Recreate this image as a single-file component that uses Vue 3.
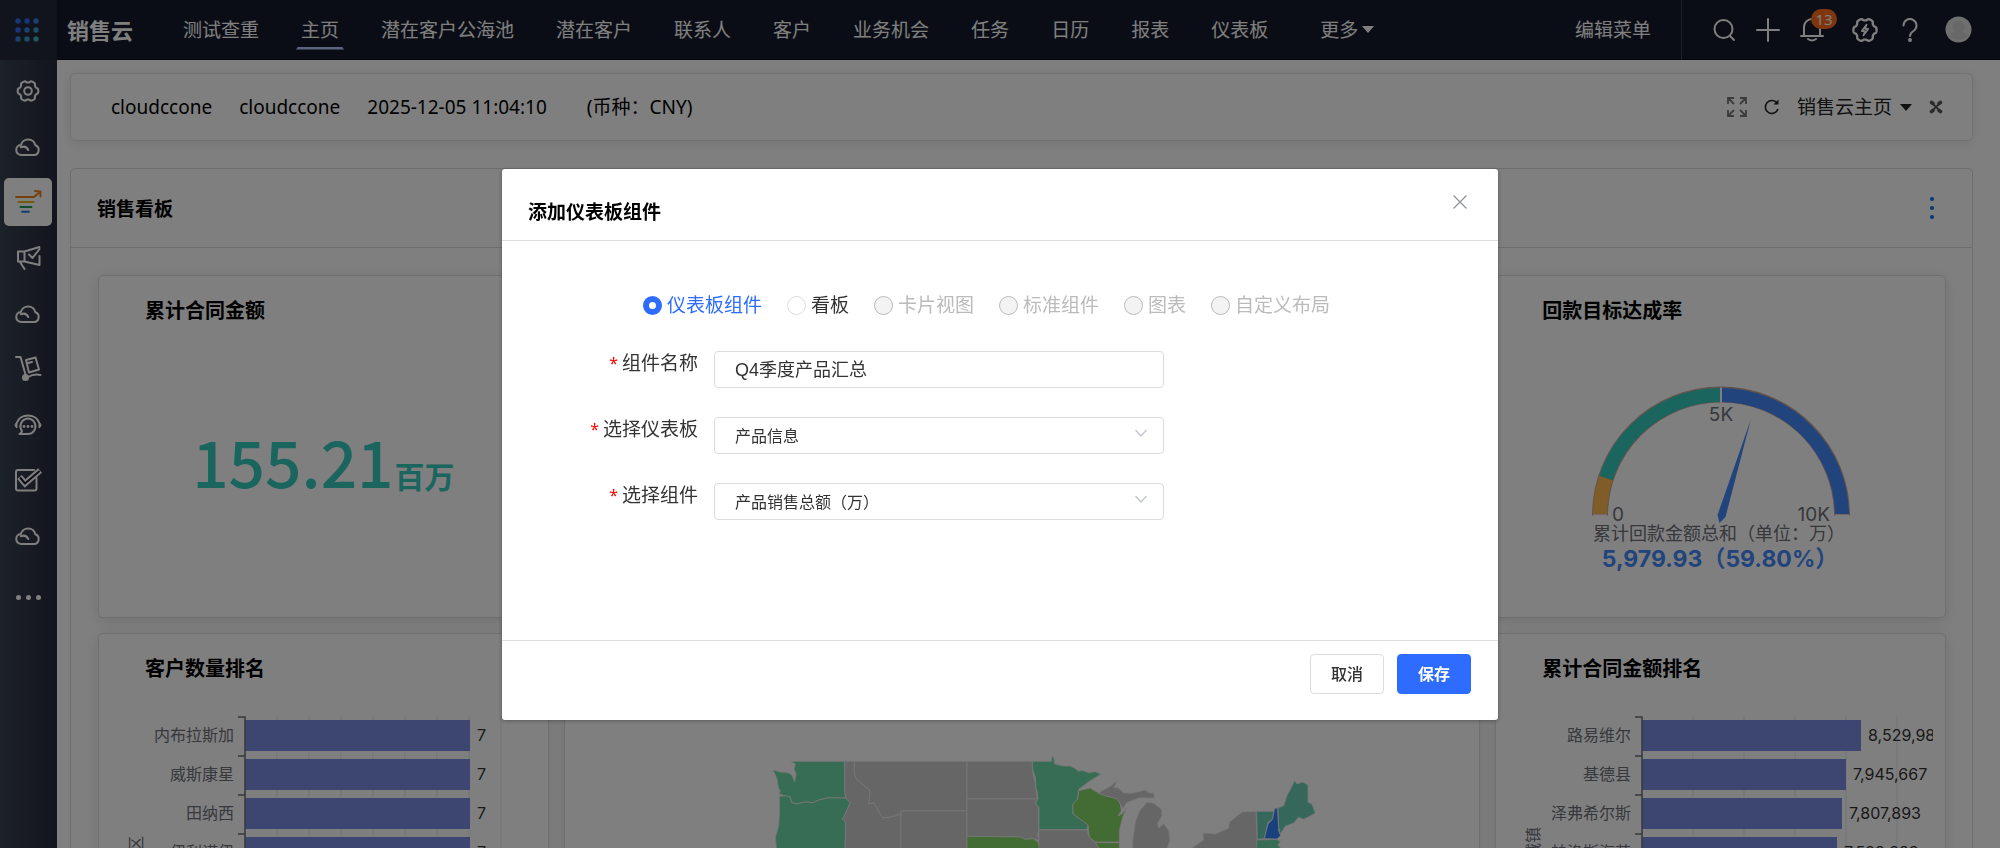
<script setup>
import { ref } from 'vue'

const navItems = ['测试查重', '主页', '潜在客户公海池', '潜在客户', '联系人', '客户', '业务机会', '任务', '日历', '报表', '仪表板']
const activeNav = ref('主页')

const sideItems = [
  { icon: 'gear', label: '设置' },
  { icon: 'cloud', label: '云一' },
  { icon: 'funnel', label: '销售云', active: true },
  { icon: 'horn', label: '营销' },
  { icon: 'cloud', label: '云二' },
  { icon: 'cart', label: '订单' },
  { icon: 'headset', label: '服务' },
  { icon: 'check', label: '任务' },
  { icon: 'cloud', label: '云三' },
]

const kinds = [
  { label: '仪表板组件', value: 'dashboard', disabled: false },
  { label: '看板', value: 'board', disabled: false },
  { label: '卡片视图', value: 'card', disabled: true },
  { label: '标准组件', value: 'standard', disabled: true },
  { label: '图表', value: 'chart', disabled: true },
  { label: '自定义布局', value: 'layout', disabled: true },
]
const kind = ref('dashboard')
const name = ref('Q4季度产品汇总')
const dashboard = ref('产品信息')
const widget = ref('产品销售总额（万）')

// Six-lobed gear outline around the origin
function gearPath(radius, depth) {
  const points = []
  for (let i = 0; i < 120; i++) {
    const a = (i / 120) * Math.PI * 2
    const wave = Math.cos(a * 6)
    const r = radius + depth * Math.tanh((wave + 0.3) * 2)
    points.push((Math.cos(a) * r).toFixed(2) + ' ' + (Math.sin(a) * r).toFixed(2))
  }
  return 'M' + points.join('L') + 'Z'
}
const gear = gearPath(9, 0.9)

const charts = {
  customers: {
    title: '客户数量排名',
    axisName: '地区',
    axisNameTop: 153,
    step: 32,
    grid: 8,
    rows: [
      { label: '内布拉斯加', value: '7', width: 225 },
      { label: '威斯康星', value: '7', width: 225 },
      { label: '田纳西', value: '7', width: 225 },
      { label: '伊利诺伊', value: '7', width: 225 },
    ],
  },
  contracts: {
    title: '累计合同金额排名',
    axisName: '城镇',
    axisNameTop: 144,
    step: 51,
    grid: 5,
    rows: [
      { label: '路易维尔', value: '8,529,983', width: 219 },
      { label: '基德县', value: '7,945,667', width: 204 },
      { label: '泽弗希尔斯', value: '7,807,893', width: 200 },
      { label: '帕洛斯海茨', value: '7,593,233', width: 195 },
    ],
  },
}

const states = [
  { c: 'mint', p: '697,362 858,362 858,455 862,472 806,472 780,478 765,486 740,484 712,490 698,485 695,470 680,465 662,461 665,450 659,442 655,415 643,387 665,394 690,397 700,404 708,424 712,400 706,385 710,370' },
  { c: 'mint', p: '662,467 680,465 695,470 698,485 712,490 740,484 765,486 780,478 806,472 862,472 874,487 862,515 852,535 861,545 858,700 653,700 653,624 650,590 660,555 662,520' },
  { c: 'none', p: '858,362 887,362 887,400 895,418 935,450 930,490 946,486 962,515 972,532 1010,526 1018,520 1027,528 1027,700 858,700 861,545 852,535 862,515 874,487 862,472 858,455' },
  { c: 'none', p: '887,362 1225,362 1225,511 1027,511 1027,528 1018,520 1010,526 972,532 962,515 946,486 930,490 935,450 895,418 887,400' },
  { c: 'none', p: '1027,511 1225,511 1225,700 1027,700' },
  { c: 'none', p: '1225,362 1420,362 1424,405 1431,430 1433,460 1436,475 1225,475' },
  { c: 'none', p: '1225,475 1436,475 1430,488 1440,500 1440,568 1437,580 1440,600 1425,594 1400,596 1385,589 1225,587' },
  { c: 'green', p: '1225,587 1385,589 1400,596 1425,594 1440,606 1444,624 1450,700 1225,700' },
  { c: 'mint', p: '1421,362 1478,362 1480,347 1486,352 1488,370 1515,376 1535,376 1550,384 1560,392 1570,389 1590,396 1610,393 1627,400 1595,420 1560,446 1557,475 1543,490 1543,520 1588,552 1585,567 1441,567 1441,500 1431,488 1438,475 1436,455 1432,440 1430,410 1422,385' },
  { c: 'green', p: '1560,450 1595,442 1610,452 1640,465 1675,474 1685,490 1688,510 1678,526 1690,520 1702,503 1692,530 1682,570 1682,604 1610,604 1592,590 1588,552 1543,520 1543,490 1557,475' },
  { c: 'none', p: '1618,458 1650,440 1677,420 1665,440 1680,443 1695,457 1720,458 1760,448 1770,456 1785,458 1788,472 1740,472 1720,480 1705,485 1692,505 1685,490 1675,474 1640,465' },
  { c: 'none', p: '1765,485 1785,488 1808,505 1810,525 1796,550 1800,562 1815,549 1830,570 1834,600 1825,624 1818,700 1722,700 1722,600 1730,545 1742,512' },
  { c: 'none', p: '1441,568 1585,568 1592,590 1610,604 1622,624 1625,700 1448,700 1440,606' },
  { c: 'green', p: '1610,606 1682,606 1684,700 1630,700 1622,624' },
  { c: 'none', p: '1890,628 1935,598 1933,577 1970,580 2010,563 2012,545 2050,514 2092,512 2094,560 2096,628 2100,700 1880,700' },
  { c: 'sea', p: '2094,512 2146,512 2142,535 2128,545 2117,594 2096,596' },
  { c: 'blue', p: '2148,503 2157,502 2160,570 2166,585 2155,595 2117,594 2128,550 2142,535' },
  { c: 'sea', p: '2158,502 2175,495 2185,465 2208,420 2215,430 2232,424 2248,432 2248,485 2260,490 2270,518 2250,528 2235,536 2220,530 2205,547 2180,557 2165,580 2160,560' },
  { c: 'mint', p: '2094,598 2155,596 2165,602 2158,614 2168,624 2180,640 2094,640' },
]
</script>

<template>
  <div class="app">
    <header class="topbar">
      <button class="launcher" aria-label="应用">
        <svg width="24" height="24" viewBox="0 0 24 24">
          <g fill="#2f6cf5"><circle cx="3" cy="3" r="2.700" /><circle cx="12" cy="3" r="2.700" /><circle cx="3" cy="12" r="2.700" /></g>
          <g fill="#3683dd"><circle cx="21" cy="3" r="2.700" /><circle cx="12" cy="12" r="2.700" /><circle cx="3" cy="21" r="2.700" /></g>
          <g fill="#3c97cc"><circle cx="21" cy="12" r="2.700" /><circle cx="12" cy="21" r="2.700" /></g>
          <circle cx="21" cy="21" r="2.700" fill="#44afb6" />
        </svg>
      </button>
      <strong class="brand">销售云</strong>
      <nav class="nav">
        <a v-for="n in navItems" :key="n" href="#" :class="{ active: n === activeNav }" @click.prevent="activeNav = n">{{ n }}</a>
        <button class="more">更多<i class="caret"></i></button>
      </nav>
      <button class="edit-menu">编辑菜单</button>
      <div class="tools">
        <button aria-label="搜索">
          <svg width="24" height="24" viewBox="0 0 24 24" class="line"><circle cx="11.500" cy="11" r="9" /><path d="M18 18l4 4" /></svg>
        </button>
        <button aria-label="新建">
          <svg width="24" height="24" viewBox="0 0 24 24" class="line"><path d="M12 1v22M1 12h22" /></svg>
        </button>
        <button aria-label="通知" class="bell">
          <svg width="24" height="24" viewBox="0 0 24 24" class="line"><path d="M1 18h22M4 18v-9a8 8 0 0 1 16 0v9M8 21q4 3 8 0" /></svg>
          <span class="badge">13</span>
        </button>
        <button aria-label="设置">
          <svg width="26" height="26" viewBox="-12 -12 24 24" class="line"><path :d="gear" transform="scale(1.08)" /><path d="M1.500-5L-3 1h3l-1.500 4L3-1H0z" stroke-width="1.500" /></svg>
        </button>
        <button aria-label="帮助">
          <svg width="24" height="24" viewBox="0 0 24 24" class="line"><path d="M5.500 7.500a6.500 6.500 0 1 1 10 5.500c-2.500 1.500-3.500 2.500-3.500 5" /><circle cx="12" cy="22" r="1" fill="#fff" /></svg>
        </button>
        <button aria-label="账户" class="avatar">
          <svg width="27" height="27" viewBox="0 0 27 27"><circle cx="13.500" cy="13.500" r="13" fill="#dedede" /><circle cx="13.500" cy="11" r="6" fill="#d0d0d0" /><path d="M5 21q1-6 8.500-6t8.500 6q-8.500 5-17 0" fill="#d0d0d0" /></svg>
        </button>
      </div>
    </header>

    <div class="shell">
      <aside class="side">
        <div class="side-list">
          <button v-for="s in sideItems" :key="s.label" :class="['tile', { on: s.active }]" :aria-label="s.label">
            <svg v-if="s.icon === 'gear'" width="28" height="28" viewBox="-14 -14 28 28" class="line"><path :d="gear" transform="scale(1.04)" /><circle r="3.800" /></svg>
            <svg v-else-if="s.icon === 'cloud'" width="28" height="30" viewBox="-14 -15 28 30" class="line"><path d="M-6.500 8H6a4.900 5 0 0 0 1.400-9.700A7.500 7.400 0 0 0-7.200-2a4.900 5 0 0 0 .7 10M-7.200.2C-4-1-1 .2.300 3" /></svg>
            <svg v-else-if="s.icon === 'funnel'" width="28" height="30" viewBox="-14 -15 28 30" fill="none" stroke-width="1.900" stroke-linecap="round">
              <path d="M-12-5H6L12-10M7-11l5.500.5L12.500-5.500" stroke="#e8821a" />
              <path d="M-9.500 0H5.500" stroke="#e9b416" /><path d="M-7.500 5H3.500" stroke="#1d9d52" /><path d="M-6 9.700H1" stroke="#2b7de0" />
            </svg>
            <svg v-else-if="s.icon === 'horn'" width="28" height="30" viewBox="-14 -15 28 30" class="line"><path d="M-10-6.500h6.500V3.500H-10zM-3.500-6.500L11.500-11M11.500-2V7L-3.500 3.500M1-3.500l3.500 3.500L11.500-9M-8 4l4.500 7" /></svg>
            <svg v-else-if="s.icon === 'cart'" width="28" height="30" viewBox="-14 -15 28 30" class="line"><path d="M-12-12h4.500L-2.500 5.500M0 8Q6 4.500 12.500 6M-2-9L7.500-11.500 11 .5 1 3.500zM0-6L4-7" /><circle cx="-2.500" cy="8.500" r="2.500" fill="#fff" /></svg>
            <svg v-else-if="s.icon === 'headset'" width="28" height="30" viewBox="-14 -15 28 30" class="line"><path d="M-11-2.500a11.500 10 0 0 1 22 0" /><path d="M-11-2.500v5.500q-2-1-2-3t2-2.500zM11-2.500v5.500q2-1 2-3t-2-2.500z" fill="#fff" stroke-width="1" /><path d="M0 9H-8.500Q-6 7.500-6 6A7.500 7.700 0 1 1 0 9" /><g fill="#fff" stroke="none"><circle cx="-4" cy="1.500" r="1.400" /><circle cy="1.500" r="1.400" /><circle cx="4" cy="1.500" r="1.400" /></g></svg>
            <svg v-else width="28" height="30" viewBox="-14 -15 28 30" class="line"><path d="M6-10h-16q-2 0-2 2V8.500q0 2 2 2H6.500q2 0 2-2V-2" /><path d="M-8.500-3l5.500 6.500L12-9.500" stroke-width="6" stroke-linecap="butt" stroke-linejoin="miter" /><path d="M-7.500-2l4.500 5.500L11-8.500" stroke="#1d1f2b" stroke-width="2" /></svg>
          </button>
        </div>
        <button class="dots" aria-label="更多应用"><i></i><i></i><i></i></button>
      </aside>

      <main class="main">
        <section class="infobar">
          <span>cloudccone</span><span>cloudccone</span><span class="time">2025-12-05 11:04:10</span><span>(币种：CNY)</span>
          <div class="info-tools">
            <button aria-label="全屏"><svg width="20" height="20" viewBox="0 0 20 20" fill="none" stroke="#777" stroke-width="1.800"><path d="M1 7V1h6M1 1l6 6M13 1h6v6M19 1l-6 6M1 13v6h6M1 19l6-6M19 13v6h-6M19 19l-6-6" /></svg></button>
            <button aria-label="刷新"><svg width="16" height="16" viewBox="0 0 16 16" fill="none" stroke="#222" stroke-width="1.600"><path d="M14 10A6.500 6.500 0 1 1 13 4" /><path d="M14.500.500V5.500H9.500z" fill="#222" stroke="none" /></svg></button>
            <button class="page-pick">销售云主页<i class="caret dark"></i></button>
            <button aria-label="工具"><svg width="14" height="14" viewBox="0 0 14 14" stroke="#555" stroke-linecap="round" fill="none"><path d="M3 3l8 8M11 3l-8 8" stroke-width="1.800" /><path d="M2.500 2.500l1.500 1M11.500 2.500l-1.500 1M2.500 11.500l1.500-1M11.500 11.500l-1.500-1" stroke-width="3.600" /></svg></button>
          </div>
        </section>

        <section class="board">
          <header class="board-head">
            <h1>销售看板</h1>
            <button class="kebab" aria-label="看板菜单"><i></i><i></i><i></i></button>
          </header>
          <div class="grid">
            <article class="card">
              <h2>累计合同金额</h2>
              <p class="metric">155.21<small>百万</small></p>
            </article>
            <article class="card wide"></article>
            <article class="card">
              <h2>回款目标达成率</h2>
              <div class="gauge">
                <svg width="280" height="200" viewBox="0 0 280 200">
                  <g fill="none" stroke-width="14">
                    <path d="M19 135.500A121 121 0 0 1 261 135.500" stroke="#c9a79a" stroke-width="16" />
                    <path d="M19 134A121 121 0 0 1 24.900 98" stroke="#ffb851" />
                    <path d="M24.900 98A121 121 0 0 1 140 15" stroke="#36cabf" />
                    <path d="M140 15A121 121 0 0 1 261 134" stroke="#4488fa" />
                  </g>
                  <path d="M140 7.500v15M12 135.500h14M254 135.500h14" stroke="#fff" stroke-width="2" />
                  <path d="M170 39L144.500 137 138.500 143 136.500 135z" fill="#4488fa" />
                  <g class="gauge-text">
                    <text x="140" y="41" text-anchor="middle">5K</text>
                    <text x="31" y="141">0</text>
                    <text x="249" y="141" text-anchor="end">10K</text>
                    <text x="138" y="160" text-anchor="middle" class="gauge-name">累计回款金额总和（单位：万）</text>
                    <text x="139" y="187" text-anchor="middle" class="gauge-value">5,979.93（59.80%）</text>
                  </g>
                </svg>
              </div>
            </article>

            <template v-for="(ch, key) in charts" :key="key">
              <article v-if="key === 'contracts'" class="card wide map">
                <svg width="547" height="120" viewBox="640 340 1641 360">
                  <polygon v-for="(s, i) in states" :key="i" :points="s.p" :class="s.c" />
                </svg>
              </article>
              <article class="card">
                <h2>{{ ch.title }}</h2>
                <svg class="bars" width="100%" height="260">
                  <path v-for="g in ch.grid" :key="'g' + g" :d="`M${134 + g * ch.step} 33V260`" stroke="#e0e6f1" />
                  <g v-for="(r, i) in ch.rows" :key="r.label">
                    <rect x="134" :y="37 + i * 39" :width="r.width" height="31" fill="#7b8ce0" />
                    <path :d="`M127 ${34 + i * 39}h7v39`" fill="none" stroke="#6e7079" stroke-width="1.500" />
                    <text x="123" :y="58 + i * 39" text-anchor="end" class="label">{{ r.label }}</text>
                    <text :x="141 + r.width" :y="58 + i * 39" class="value">{{ r.value }}</text>
                  </g>
                  <text :transform="`translate(31 ${ch.axisNameTop}) rotate(-90)`" text-anchor="end" class="label">{{ ch.axisName }}</text>
                </svg>
              </article>
            </template>
          </div>
        </section>
      </main>
    </div>

    <div class="overlay">
      <form class="dialog" role="dialog" aria-labelledby="dialog-title" @submit.prevent>
        <header class="dialog-head">
          <h2 id="dialog-title">添加仪表板组件</h2>
          <button type="button" class="close" aria-label="关闭"><svg width="14" height="14" viewBox="0 0 14 14" stroke="#909399" stroke-width="1.300"><path d="M.500.500l13 13M13.500.500l-13 13" /></svg></button>
        </header>
        <div class="dialog-body">
          <div class="radios">
            <label v-for="k in kinds" :key="k.value" :class="{ off: k.disabled, on: kind === k.value }">
              <input v-model="kind" type="radio" name="kind" :value="k.value" :disabled="k.disabled" />{{ k.label }}
            </label>
          </div>
          <div class="field">
            <label for="f-name"><b>*</b>组件名称</label>
            <input id="f-name" v-model="name" type="text" />
          </div>
          <div class="field">
            <label for="f-dash"><b>*</b>选择仪表板</label>
            <div class="select">
              <select id="f-dash" v-model="dashboard"><option>产品信息</option></select>
              <svg width="12" height="8" viewBox="0 0 12 8"><path d="M.500 1L6 7 11.500 1" /></svg>
            </div>
          </div>
          <div class="field">
            <label for="f-widget"><b>*</b>选择组件</label>
            <div class="select">
              <select id="f-widget" v-model="widget"><option>产品销售总额（万）</option></select>
              <svg width="12" height="8" viewBox="0 0 12 8"><path d="M.500 1L6 7 11.500 1" /></svg>
            </div>
          </div>
        </div>
        <footer class="dialog-foot">
          <button type="button" class="btn">取消</button>
          <button type="submit" class="btn primary">保存</button>
        </footer>
      </form>
    </div>
  </div>
</template>

<style>
body {
  background: #fff;
}
</style>

<style scoped>
* {
  box-sizing: border-box;
}
.app {
  height: 100vh;
  overflow: hidden;
  font: 19px/28px "Noto Sans", "Noto Sans CJK SC", sans-serif;
  color: #000;
}
button {
  font: inherit;
  color: inherit;
  background: none;
  border: 0;
  padding: 0;
  display: inline-flex;
  align-items: center;
}
svg {
  display: block;
  flex: none;
}
h1,
h2,
p {
  margin: 0;
}
.line {
  fill: none;
  stroke: #fff;
  stroke-width: 2;
  stroke-linecap: round;
  stroke-linejoin: round;
}
.topbar {
  height: 60px;
  display: flex;
  align-items: center;
  background: #151a2c;
  border-bottom: 1px solid #0b0d18;
  color: #fff;
}
.launcher {
  width: 57px;
  height: 60px;
  justify-content: center;
  padding-right: 4px;
  background: #25283a;
}
.brand {
  width: 126px;
  padding-left: 10px;
  font-size: 22px;
}
.nav {
  flex: 1;
  display: flex;
  gap: 32px;
  margin-left: -5px;
  white-space: nowrap;
}
.nav a {
  position: relative;
  color: #fff;
  padding: 0 5px;
  text-decoration: none;
}
.nav a.active::after {
  content: "";
  position: absolute;
  left: 0;
  right: 0;
  bottom: -6px;
  height: 3px;
  background: #b9c6ff;
  clip-path: polygon(2px 0, calc(100% - 2px) 0, 100% 100%, 0 100%);
}
.more {
  margin-left: 15px;
}
.caret {
  margin-left: 4px;
  border: 6px solid transparent;
  border-top: 7px solid #fff;
  border-bottom: 0;
}
.caret.dark {
  margin-left: 8px;
  border-top-color: #222;
}
.edit-menu {
  height: 60px;
  padding-right: 30px;
  border-right: 1px solid #3a3f55;
}
.tools {
  display: flex;
  align-items: center;
  gap: 20px;
  padding: 0 28px 0 30px;
}
.bell {
  position: relative;
  padding-right: 8px;
}
.badge {
  position: absolute;
  left: 11px;
  top: -9px;
  width: 26px;
  height: 20px;
  border-radius: 10px;
  background: #ff6a1a;
  font-size: 15px;
  line-height: 20px;
  text-align: center;
}
.tools .avatar {
  margin-left: 3px;
}
.shell {
  display: flex;
  align-items: flex-start;
}
.side {
  flex: none;
  width: 57px;
  min-height: 100vh;
  padding: 7px 5px 0 4px;
  background: linear-gradient(90deg, #394453, #27293c);
}
.side-list {
  height: 493px;
  display: flex;
  flex-direction: column;
  justify-content: space-between;
}
.tile {
  width: 48px;
  height: 48px;
  justify-content: center;
  border-radius: 5px;
}
.tile.on {
  background: #fff;
}
.dots {
  width: 48px;
  margin-top: 35px;
  justify-content: center;
  gap: 5px;
}
.dots i {
  width: 5px;
  height: 5px;
  border-radius: 50%;
  background: #fff;
}
.main {
  flex: 1;
  min-width: 0;
  padding: 13px 27px 0 13px;
}
.infobar {
  height: 68px;
  display: flex;
  align-items: center;
  gap: 27px;
  padding: 0 29px 0 40px;
  border: 1px solid #e2e2e2;
  border-radius: 5px;
  box-shadow: 0 2px 12px rgba(0, 0, 0, 0.1);
}
.time {
  margin-right: 13px;
}
.info-tools {
  margin-left: auto;
  display: flex;
  align-items: center;
  gap: 17px;
  color: #222;
}
.board {
  margin-top: 27px;
  border: 1px solid #dcdcdc;
  border-radius: 5px;
}
.board-head {
  height: 79px;
  display: flex;
  align-items: center;
  justify-content: space-between;
  padding: 0 38px 0 26px;
  border-bottom: 1px solid #dcdcdc;
}
.board-head h1 {
  padding-top: 2px;
  font-size: 19px;
  line-height: 28px;
}
.kebab {
  flex-direction: column;
  gap: 5px;
}
.kebab i {
  width: 4px;
  height: 4px;
  border-radius: 50%;
  background: #0b6fdc;
}
.grid {
  display: grid;
  grid-template-columns: repeat(12, minmax(0, 1fr));
  gap: 15px;
  padding: 27px 26px 27px 27px;
}
.card {
  grid-column: span 3;
  min-height: 343px;
  display: flex;
  flex-direction: column;
  padding: 21px 12px 0;
  background: #fff;
  border: 1px solid #dfdfdf;
  border-radius: 5px;
  box-shadow: 0 3px 14px rgba(0, 0, 0, 0.12);
}
.card.wide {
  grid-column: span 6;
}
.card h2 {
  padding: 0 34px;
  font-size: 20px;
  line-height: 28px;
}
.metric {
  display: flex;
  align-items: baseline;
  justify-content: center;
  margin-top: 87px;
  font: 500 64px/96px "Noto Sans CJK SC", sans-serif;
  color: #36cabf;
}
.metric small {
  font-size: 30px;
  font-weight: 700;
  margin-left: 1px;
}
.gauge {
  display: flex;
  justify-content: center;
  margin-top: 55px;
}
.gauge-text {
  font: 19px Inter, "Noto Sans CJK SC", sans-serif;
  fill: #6e7079;
}
.gauge-name {
  font-size: 18px;
}
.gauge-value {
  font-size: 23px;
  font-weight: 700;
  fill: #4488fa;
}
.bars {
  overflow: hidden;
}
.label,
.value {
  font: 16px Inter, "Noto Sans CJK SC", sans-serif;
  fill: #6e7079;
}
.value {
  fill: #333;
}
.card.map {
  padding: 120px 0 0 207px;
}
.map polygon {
  stroke: #eee;
  stroke-width: 2.5;
  stroke-linejoin: round;
}
.map .mint {
  fill: #70daaa;
}
.map .none {
  fill: #ccc;
}
.map .green {
  fill: #86d86a;
}
.map .sea {
  fill: #6aceb4;
}
.map .blue {
  fill: #3482ff;
}
.overlay {
  position: fixed;
  inset: 0;
  display: flex;
  align-items: flex-start;
  justify-content: center;
  padding-top: 169px;
  background: rgba(0, 0, 0, 0.5);
}
.dialog {
  width: min(996px, 100%);
  background: #fff;
  border-radius: 3px;
  box-shadow: 0 1px 4px rgba(0, 0, 0, 0.3);
  color: #333;
}
.dialog-head {
  height: 72px;
  display: flex;
  align-items: flex-start;
  justify-content: space-between;
  padding: 26px 31px 0 26px;
  border-bottom: 1px solid #dcdcdc;
}
.dialog-head h2 {
  margin-top: 3px;
  font-size: 19px;
  line-height: 28px;
  color: #000;
}
.close {
  height: 14px;
}
.dialog-body {
  min-height: 399px;
  padding: 50px 141px 0;
}
.radios {
  display: flex;
  gap: 25px;
  white-space: nowrap;
  margin-bottom: 32px;
}
.radios label {
  display: flex;
  align-items: center;
  gap: 5px;
}
.radios .on {
  color: #2d6cff;
}
.radios .off {
  color: #bbb;
}
.radios input {
  appearance: none;
  width: 19px;
  height: 19px;
  margin: 0;
  border: 1px solid #dcdcdc;
  border-radius: 50%;
  background: #fff;
}
.radios input:checked {
  border: 6px solid #2d6cff;
}
.radios input:disabled {
  border-color: #bbb;
  background: #f3f3f3;
}
.field {
  display: flex;
  gap: 16px;
  margin: 0 0 29px -72px;
}
.field label {
  width: 127px;
  display: flex;
  justify-content: flex-end;
  white-space: nowrap;
  line-height: 24px;
}
.field b {
  font-size: 16px;
  font-weight: 400;
  color: #f00;
  margin-right: 4px;
}
.field input,
.select {
  width: 450px;
  height: 37px;
  border: 1px solid #dcdcdc;
  border-radius: 4px;
  background: #fff;
}
.field input {
  padding: 0 20px 3px;
  font: 18px "Liberation Sans", "Noto Sans CJK SC", sans-serif;
  color: #333;
}
.select {
  position: relative;
}
.select select {
  appearance: none;
  width: 100%;
  height: 100%;
  padding: 0 40px 2px 20px;
  border: 0;
  background: none;
  font: 16px "Noto Sans CJK SC", sans-serif;
  color: #333;
}
.select svg {
  position: absolute;
  right: 16px;
  top: 11px;
  fill: none;
  stroke: #c0c4cc;
  stroke-width: 1.3;
  pointer-events: none;
}
.dialog-foot {
  height: 80px;
  display: flex;
  justify-content: flex-end;
  gap: 13px;
  padding: 13px 27px 0;
  border-top: 1px solid #dcdcdc;
}
.btn {
  width: 74px;
  height: 40px;
  justify-content: center;
  border: 1px solid #dcdcdc;
  border-radius: 4px;
  font-size: 16px;
  font-weight: 500;
}
.btn.primary {
  border-color: #2d6cff;
  background: #2d6cff;
  color: #fff;
  font-weight: 700;
}
</style>
